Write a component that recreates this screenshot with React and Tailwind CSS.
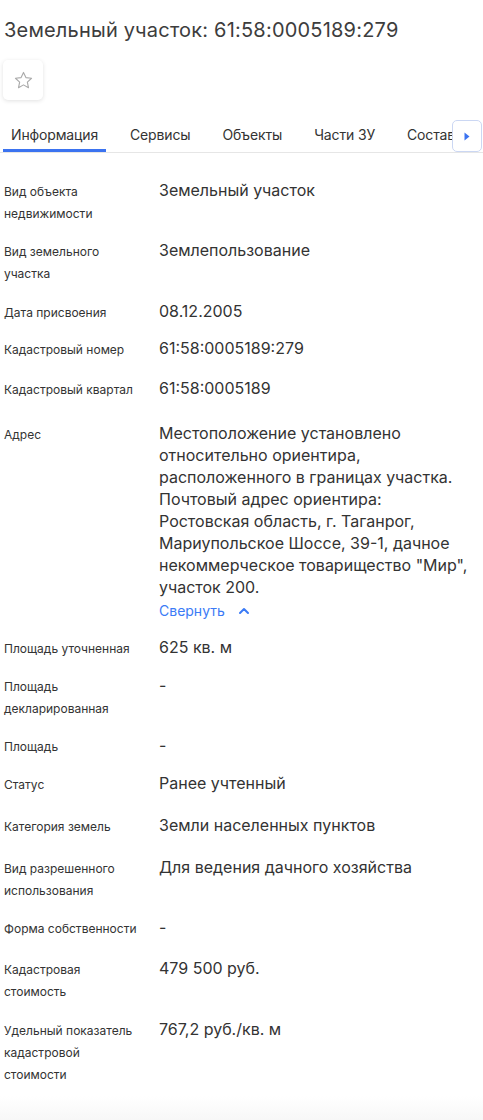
import React from "react";

const rows = [
  { label: "Вид объекта недвижимости", value: "Земельный участок", mt: "mt-0" },
  { label: "Вид земельного участка", value: "Землепользование", mt: "mt-[16px]" },
  { label: "Дата присвоения", value: "08.12.2005", mt: "mt-[17px]" },
  { label: "Кадастровый номер", value: "61:58:0005189:279", mt: "mt-[15px]" },
  { label: "Кадастровый квартал", value: "61:58:0005189", mt: "mt-[18px]" },
  {
    label: "Адрес",
    value:
      'Местоположение установлено относительно ориентира, расположенного в границах участка. Почтовый адрес ориентира: Ростовская область, г. Таганрог, Мариупольское Шоссе, 39-1, дачное некоммерческое товарищество "Мир", участок 200.',
    mt: "mt-[23px]",
    collapse: true,
  },
  { label: "Площадь уточненная", value: "625 кв. м", mt: "mt-[16px]" },
  { label: "Площадь декларированная", value: "-", mt: "mt-[16px]" },
  { label: "Площадь", value: "-", mt: "mt-[16px]" },
  { label: "Статус", value: "Ранее учтенный", mt: "mt-[16px]" },
  { label: "Категория земель", value: "Земли населенных пунктов", mt: "mt-[20px]" },
  { label: "Вид разрешенного использования", value: "Для ведения дачного хозяйства", mt: "mt-[20px]" },
  { label: "Форма собственности", value: "-", mt: "mt-[16px]" },
  { label: "Кадастровая стоимость", value: "479 500 руб.", mt: "mt-[19px]" },
  { label: "Удельный показатель кадастровой стоимости", value: "767,2 руб./кв. м", mt: "mt-[17px]" },
];

const tabs = ["Информация", "Сервисы", "Объекты", "Части ЗУ", "Состав"];

export default function App() {
  return (
    <div
      className="w-[483px] min-h-[1120px] bg-white text-[#333333] overflow-hidden flex flex-col"
      style={{ fontFamily: "Inter, 'Noto Sans', sans-serif" }}
    >
      <h1 className="pl-[4px] pt-[17px] text-[20px] leading-[26px] font-normal text-[#3d3d3d] tracking-[0.2px]">
        Земельный участок: 61:58:0005189:279
      </h1>

      <div className="pl-[3px] mt-[17px]">
        <button className="w-[40px] h-[40px] rounded-[5px] bg-white shadow-[0_1px_4px_rgba(0,0,0,0.12)] flex items-center justify-center">
          <svg width="21" height="21" viewBox="0 0 24 24" fill="none" stroke="#ababab" strokeWidth="1.3" strokeLinejoin="round">
            <path d="M12 2.8l2.75 5.9 6.45.75-4.8 4.4 1.3 6.35L12 17l-5.7 3.2 1.3-6.35-4.8-4.4 6.45-.75z" />
          </svg>
        </button>
      </div>

      <div className="relative mt-[20px] h-[33px] border-b border-[#e6e6e6] overflow-hidden">
        <div className="flex gap-4 pl-[3px] h-full">
          {tabs.map((t, i) => (
            <div
              key={t}
              className={
                i === 0
                  ? "px-2 h-full flex items-center text-[14px] tracking-[-0.15px] whitespace-nowrap text-[#333] border-b-[3px] border-[#3b73f0]"
                  : "px-2 h-full flex items-center text-[14px] tracking-[-0.15px] whitespace-nowrap text-[#333] pb-[3px]"
              }
            >
              {t}
            </div>
          ))}
        </div>
        <button className="absolute right-[1px] top-0 w-[30px] h-[32px] rounded-[5px] border border-[#cbd7f3] bg-white flex items-center justify-center">
          <svg width="6" height="9" viewBox="0 0 6 9">
            <path d="M0.5 0.5L5.5 4.5L0.5 8.5Z" fill="#3b73f0" />
          </svg>
        </button>
      </div>

      <div className="pl-[4px] pr-[8px] pt-[28px] flex flex-col">
        {rows.map((r) => (
          <div key={r.label} className={"flex " + r.mt}>
            <div className="w-[155px] shrink-0 pr-[18px] text-[12px] leading-[22px] text-[#333]">
              {r.label}
            </div>
            <div className="flex-1 text-[16px] leading-[22px] text-[#333] -mt-[2px]">
              <div>{r.value}</div>
              {r.collapse && (
                <div className="flex items-center gap-[13px] text-[14px] leading-[22px] text-[#3b7bf6] mt-[2px]">
                  <span>Свернуть</span>
                  <svg width="12" height="8" viewBox="0 0 12 8" fill="none" stroke="#3b7bf6" strokeWidth="2" strokeLinecap="round" strokeLinejoin="round">
                    <path d="M2 6l4-4 4 4" />
                  </svg>
                </div>
              )}
            </div>
          </div>
        ))}
      </div>
      <div className="flex-1" />
      <div className="h-[24px] bg-gradient-to-b from-white to-[#f7f7f7]" />
    </div>
  );
}
